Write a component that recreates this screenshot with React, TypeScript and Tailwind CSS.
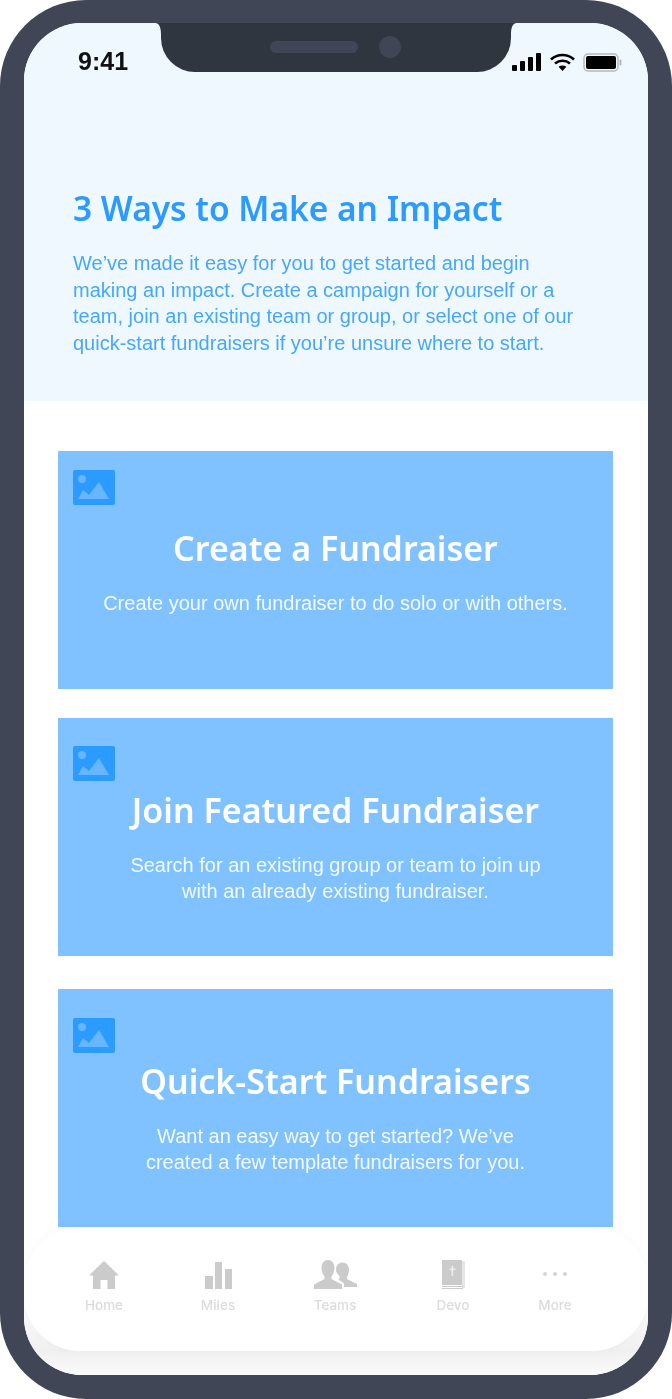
import React from "react";

const titleFont = "[font-family:'Noto_Sans','Open_Sans',sans-serif]";

function ImageIcon() {
  return (
    <svg width="42" height="35" viewBox="0 0 42 35" className="absolute left-[15px]">
      <rect width="42" height="35" rx="2" fill="#2b9bff" />
      <circle cx="9" cy="9" r="4" fill="#68b6ff" />
      <path d="M5 29 L10 20 L16 25 L26 12 L36 29 Z" fill="#68b6ff" />
    </svg>
  );
}

function Card({ title, lines, iconTop, titleTop, className }: { title: string; lines: string[]; iconTop: string; titleTop: string; className: string }) {
  return (
    <section className={`relative mx-[34px] h-[238px] w-[555px] bg-[#7fc2ff] text-center text-white ${className}`}>
      <div className={`absolute left-0 ${iconTop}`}><ImageIcon /></div>
      <h2 className={`${titleTop} text-[34px] font-semibold leading-[44px] blur-[0.3px] ${titleFont}`}>{title}</h2>
      <div className="mt-[20px] font-['Liberation_Sans',Arial,sans-serif] text-[20px] leading-[26px] text-white/90 blur-[0.3px]">
        {lines.map((l) => (
          <p key={l}>{l}</p>
        ))}
      </div>
    </section>
  );
}

function Tab({ label, ml, children }: { label: string; ml: string; children: React.ReactNode }) {
  return (
    <div className={`flex w-[100px] flex-col items-center ${ml}`}>
      <div className="flex h-[32px] items-end justify-center">{children}</div>
      <span className="mt-[7px] font-['Inter',sans-serif] text-[13.5px] font-medium leading-[18px] text-[#dcdcdc] blur-[0.4px]">{label}</span>
    </div>
  );
}

export default function App() {
  return (
    <div className="h-[1399px] w-[672px] overflow-hidden bg-white">
      <div className="h-[1399px] w-[672px] rounded-[86px] bg-[#404656] px-[24px] pt-[23px]">
        <div className="relative h-[1352px] w-[624px] overflow-hidden rounded-[58px] bg-white">
          {/* notch */}
          <div className="absolute left-[137px] top-0 z-20 flex h-[49px] w-[350px] items-start justify-center rounded-b-[34px] bg-[#30363f]">
            <div className="ml-[-2px] mt-[18px] h-[12px] w-[88px] rounded-full bg-[#404656]" />
            <div className="ml-[21px] mt-[13px] h-[22px] w-[22px] rounded-full bg-[#404656]" />
          </div>
          <svg width="6" height="12" className="absolute left-[131px] top-0 z-20"><path d="M0 0H6V12C6 6 5 0 0 0Z" fill="#30363f" /></svg>
          <svg width="6" height="12" className="absolute left-[487px] top-0 z-20"><path d="M6 0H0V12C0 6 1 0 6 0Z" fill="#30363f" /></svg>

          {/* header */}
          <header className="h-[378px] bg-[#f0f8ff]">
            <div className="flex h-[52px] items-start pl-[54px] pr-[26px] pt-[25px]">
              <span className="font-['Liberation_Sans',Arial,sans-serif] text-[25px] font-bold leading-[26px] text-[#111] blur-[0.3px]">9:41</span>
              <div className="ml-auto mt-[5px] flex items-start">
                <svg width="29" height="18" viewBox="0 0 29 18" fill="#000"><rect x="0" y="12" width="5" height="6" rx="1" /><rect x="8" y="8" width="5" height="10" rx="1" /><rect x="16" y="4" width="5" height="14" rx="1" /><rect x="24" y="0" width="5" height="18" rx="1" /></svg>
                <svg width="25" height="18" viewBox="0 0 25 18" fill="none" stroke="#000" strokeWidth="2.6" className="ml-[9px]"><path d="M1 6.5C7.5 0.5 17.5 0.5 24 6.5" /><path d="M5 10.5C9.5 6.8 15.5 6.8 20 10.5" /><path d="M12.5 18L8.6 13.8C11 12 14 12 16.4 13.8Z" fill="#000" stroke="none" /></svg>
                <svg width="39" height="19" viewBox="0 0 39 19" className="ml-[8px]"><rect x="1" y="1" width="34" height="17" rx="4" fill="none" stroke="#b5b8bb" strokeWidth="1.5" /><rect x="3" y="3" width="30" height="13" rx="2" fill="#000" /><rect x="36.5" y="6.5" width="2" height="6" rx="1" fill="#b5b8bb" /></svg>
              </div>
            </div>
            <h1 className={`ml-[49px] pt-[111px] text-[33.5px] font-semibold leading-[44px] text-[#2b9bff] blur-[0.3px] ${titleFont}`}>3 Ways to Make an Impact</h1>
            <div className="ml-[49px] mt-[20px] font-['Liberation_Sans',Arial,sans-serif] text-[20px] leading-[26.6px] text-[#46a7ff] blur-[0.3px]">
              <p>We’ve made it easy for you to get started and begin</p>
              <p>making an impact. Create a campaign for yourself or a</p>
              <p>team, join an existing team or group, or select one of our</p>
              <p>quick-start fundraisers if you’re unsure where to start.</p>
            </div>
          </header>

          {/* cards */}
          <main>
            <Card className="mt-[50px]" iconTop="top-[19px]" titleTop="pt-[75px]" title="Create a Fundraiser" lines={["Create your own fundraiser to do solo or with others."]} />
            <Card className="mt-[29px]" iconTop="top-[28px]" titleTop="pt-[70px]" title="Join Featured Fundraiser" lines={["Search for an existing group or team to join up", "with an already existing fundraiser."]} />
            <Card className="mt-[33px]" iconTop="top-[29px]" titleTop="pt-[70px]" title="Quick-Start Fundraisers" lines={["Want an easy way to get started? We’ve", "created a few template fundraisers for you."]} />
          </main>

          {/* bottom bar */}
          <div className="absolute inset-x-0 bottom-0 h-[80px] bg-linear-to-b from-white via-[#f0f0f0] via-70% to-[#fafafa]" />
          <nav className="absolute inset-x-0 top-[1204px] z-10 flex h-[124px] items-start rounded-[56px] bg-white pt-[30px] shadow-[0_0_12px_rgba(0,0,0,0.03)]">
            <Tab label="Home" ml="ml-[30px]">
              <svg width="30" height="28" viewBox="0 0 30 28" fill="#cbcbcb"><path d="M15 0L30 14.5H26V28H18.5V19H11.5V28H4V14.5H0Z" /></svg>
            </Tab>
            <Tab label="Miles" ml="ml-[14px]">
              <svg width="27" height="27" viewBox="0 0 27 27" fill="#cbcbcb"><rect x="0" y="14" width="8" height="13" /><rect x="10" y="0" width="7" height="27" /><rect x="20" y="7" width="7" height="20" /></svg>
            </Tab>
            <Tab label="Teams" ml="ml-[17px]">
              <svg width="43" height="29" viewBox="0 0 43 29" fill="#cbcbcb"><path d="M14 0C18 0 20.5 3 20.5 8C20.5 12 18.5 15 17.5 16.5V19L28 24.5V29H0V24.5L10.5 19V16.5C9.5 15 7.5 12 7.5 8C7.5 3 10 0 14 0Z" /><path d="M28.5 2.5C32.5 2.5 35 5.5 35 10C35 13 33.5 15.5 33 17V19L43 24V27H30V23.5L24.5 19.5C25.5 18.5 26 17.5 25.5 16C23.5 14 22 12.5 22 10C22 5.5 24.5 2.5 28.5 2.5Z" /></svg>
            </Tab>
            <Tab label="Devo" ml="ml-[18px]">
              <svg width="23" height="29" viewBox="0 0 23 29"><rect x="0" y="0" width="20" height="25" fill="#cbcbcb" /><rect x="20" y="1" width="3" height="27" fill="#e6e6e6" /><rect x="0" y="26" width="21" height="1" fill="#cbcbcb" /><rect x="0" y="28" width="21" height="1" fill="#cbcbcb" /><path d="M9.5 6h1.6v2.5h2.4v1.5h-2.4v6H9.5v-6H7.5V8.5h2Z" fill="#ededed" /></svg>
            </Tab>
            <Tab label="More" ml="ml-[2px]">
              <svg width="26" height="6" viewBox="0 0 26 6" fill="#d4d4d4" className="mb-[12px]"><circle cx="3" cy="3" r="2" /><circle cx="13" cy="3" r="2" /><circle cx="23" cy="3" r="2" /></svg>
            </Tab>
          </nav>
        </div>
      </div>
    </div>
  );
}
